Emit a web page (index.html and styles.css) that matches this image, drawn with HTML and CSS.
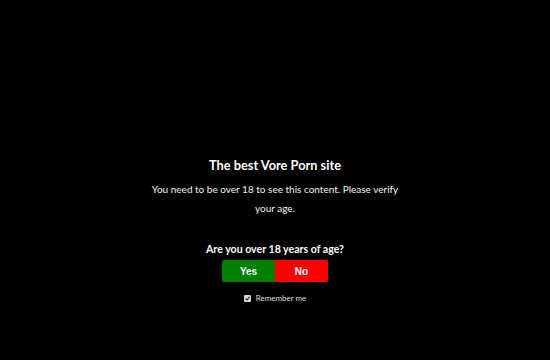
FILE: index.html
```html
<!DOCTYPE html>
<html lang="en">
<head>
<meta charset="utf-8">
<title>Age verification</title>
<link rel="stylesheet" href="styles.css">
</head>
<body>
<main class="gate">
  <h1 class="title">The best Vore Porn site</h1>
  <p class="desc">You need to be over 18 to see this content. Please verify your age.</p>
  <h2 class="question">Are you over 18 years of age?</h2>
  <div class="buttons">
    <button class="btn btn-yes" type="button">Yes</button>
    <button class="btn btn-no" type="button">No</button>
  </div>
  <label class="remember"><span class="check"><svg viewBox="0 0 7 7" width="7" height="7"><path d="M1.5 3.6 L3 5 L5.6 1.8" fill="none" stroke="#222" stroke-width="1.1"/></svg></span>Remember me</label>
</main>
</body>
</html>
```
FILE: styles.css
```css
html, body {
  margin: 0;
  padding: 0;
  background: #000;
  height: 100%;
}
body {
  font-family: Lato, "Open Sans", sans-serif;
  color: #fff;
}
.gate {
  display: flex;
  flex-direction: column;
  align-items: center;
  padding-top: 157px;
}
.title {
  margin: 0;
  font-size: 12.8px;
  font-weight: 700;
  line-height: 17px;
}
.desc {
  margin: 6px 0 0;
  width: 250px;
  text-align: center;
  font-size: 10px;
  line-height: 19px;
  color: #f2f2f2;
}
.question {
  margin: 24px 0 0;
  font-size: 10.6px;
  font-weight: 700;
  line-height: 14px;
}
.buttons {
  display: flex;
  margin-top: 4px;
}
.btn {
  width: 53px;
  height: 22px;
  border: 0;
  padding: 0;
  color: #fff;
  font-family: "Liberation Sans", Arial, sans-serif;
  font-weight: 700;
  font-size: 10px;
  cursor: pointer;
}
.btn-yes {
  background: #008000;
  border-radius: 2px 0 0 2px;
}
.btn-no {
  background: #ff0000;
  border-radius: 0 2px 2px 0;
}
.remember {
  display: flex;
  align-items: center;
  gap: 5px;
  margin-top: 11px;
  font-size: 8px;
  color: #ddd;
}
.check {
  display: block;
  width: 7px;
  height: 7px;
  background: #d8d8d8;
  border-radius: 1px;
}
.check svg {
  display: block;
}
```
